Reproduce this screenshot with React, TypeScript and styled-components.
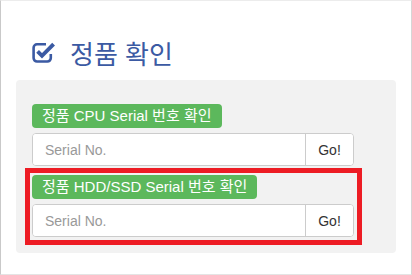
import React from "react";
import styled, { createGlobalStyle } from "styled-components";

const Global = createGlobalStyle`
  html, body { margin: 0; padding: 0; background: #fff; }
  body { font-family: "Liberation Sans", "Noto Sans CJK KR", Arial, sans-serif; }
  * { box-sizing: border-box; }
`;

const Frame = styled.div`
  width: 412px;
  height: 275px;
  border-left: 1px solid #c9c9c9;
  border-right: 1px solid #d6d6d6;
  border-top: 1px solid #ececec;
  border-bottom: 1px solid #e4e4e4;
  padding-top: 41px;
`;

const Heading = styled.h2`
  margin: 0 0 0 31px;
  height: 38px;
  display: flex;
  align-items: flex-start;
  gap: 15px;
  color: #3b5aa3;
  font-family: "Liberation Sans", "Noto Sans CJK KR", sans-serif;
  font-weight: 400;
  font-size: 26px;
  line-height: 26px;
`;

const Icon = styled.svg`
  width: 23px;
  height: 21px;
  flex: none;
`;

const Panel = styled.div`
  margin-left: 15px;
  width: 380px;
  height: 173px;
  background: #f2f2f2;
  border-radius: 4px;
  padding: 24px 0 0 16px;
`;

const Group = styled.div<{ $highlight?: boolean }>`
  width: ${(p) => (p.$highlight ? "337px" : "322px")};
  margin: ${(p) => (p.$highlight ? "2px 0 0 -7px" : "0")};
  padding: ${(p) => (p.$highlight ? "2px 3px 3px 2px" : "0")};
  border: ${(p) => (p.$highlight ? "5px solid #ed1c24" : "none")};
`;

const Badge = styled.span`
  display: inline-block;
  height: 24px;
  line-height: 24px;
  padding: 0 10px 0 10px;
  background: #5cb85c;
  color: #fff;
  font-size: 15px;
  font-weight: 400;
  border-radius: 4px;
  white-space: nowrap;
`;

const InputGroup = styled.div<{ $gap: number }>`
  display: flex;
  width: 322px;
  height: 33px;
  margin-top: ${(p) => p.$gap}px;
  border: 1px solid #cccccc;
  border-radius: 4px;
  background: #fff;
  overflow: hidden;
`;

const Field = styled.input`
  flex: 1;
  min-width: 0;
  border: none;
  outline: none;
  padding: 0 12px;
  font-family: "Liberation Sans", Arial, sans-serif;
  font-size: 14px;
  color: #555;
  background: #fff;
  &::placeholder { color: #999; }
`;

const GoButton = styled.button`
  width: 48px;
  flex: none;
  border: none;
  border-left: 1px solid #cccccc;
  background: #fff;
  color: #333;
  font-family: "Liberation Sans", Arial, sans-serif;
  font-size: 14px;
  font-weight: 400;
  padding: 0;
`;

const CheckIcon = () => (
  <Icon viewBox="0 0 23 21">
    <path
      d="M14 2.3H5a3.4 3.4 0 0 0-3.4 3.4v10.4a3.4 3.4 0 0 0 3.4 3.4h10.4a3.4 3.4 0 0 0 3.4-3.4V12"
      fill="none"
      stroke="#3b5aa3"
      strokeWidth="2.6"
    />
    <path d="M5.6 9.4 L10 13.8 L21.6 2.2" fill="none" stroke="#3b5aa3" strokeWidth="3.9" />
  </Icon>
);

const SerialRow = ({ label, gap }: { label: string; gap: number }) => (
  <>
    <Badge>{label}</Badge>
    <InputGroup $gap={gap}>
      <Field placeholder="Serial No." />
      <GoButton>Go!</GoButton>
    </InputGroup>
  </>
);

export default function App() {
  return (
    <>
      <Global />
      <Frame>
        <Heading>
          <CheckIcon />
          <span>정품 확인</span>
        </Heading>
        <Panel>
          <Group>
            <SerialRow label="정품 CPU Serial 번호 확인" gap={5} />
          </Group>
          <Group $highlight>
            <SerialRow label="정품 HDD/SSD Serial 번호 확인" gap={5} />
          </Group>
        </Panel>
      </Frame>
    </>
  );
}
